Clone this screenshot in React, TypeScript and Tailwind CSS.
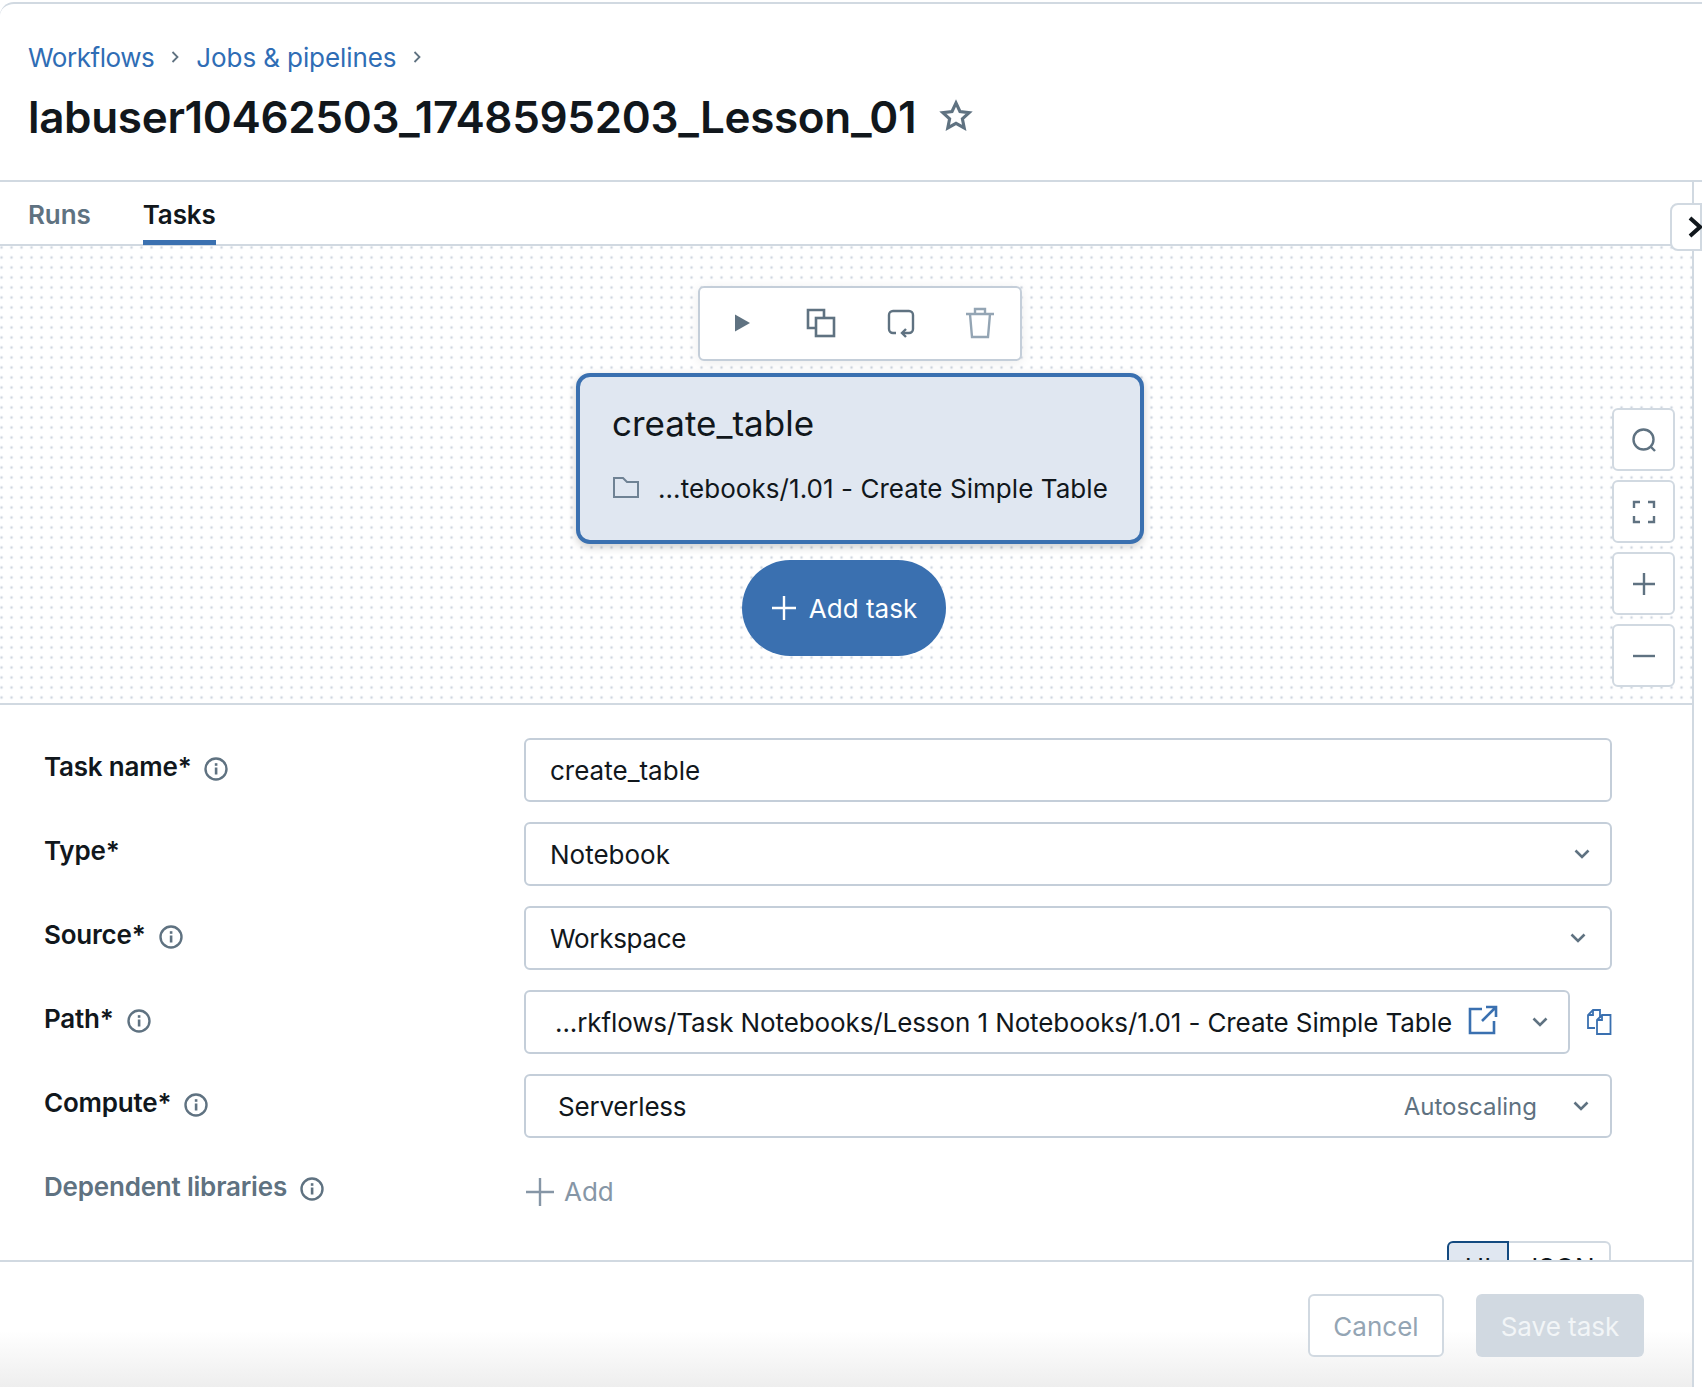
import React from 'react';

const InfoIcon = () => (
  <svg width="24" height="24" viewBox="0 0 24 24" fill="none" className="mt-[5px] shrink-0">
    <circle cx="12" cy="12" r="10.5" stroke="#5f7281" strokeWidth="2.400" />
    <rect x="10.800" y="10.500" width="2.600" height="7" fill="#5f7281" />
    <rect x="10.800" y="6.200" width="2.600" height="2.600" fill="#5f7281" />
  </svg>
);

const Chevron = () => (
  <svg width="20" height="20" viewBox="0 0 20 20" fill="none" className="shrink-0">
    <path d="M3.5 6.5 10 13l6.5-6.5" stroke="#5f7281" strokeWidth="2.600" />
  </svg>
);

const Crumb = () => (
  <svg width="12" height="16" viewBox="0 0 12 16" fill="none" className="shrink-0">
    <path d="M3.5 3 8.5 8l-5 5" stroke="#5f7281" strokeWidth="1.800" />
  </svg>
);

const ZoomButton: React.FC<{ children: React.ReactNode }> = ({ children }) => (
  <div className="flex h-[63px] w-[63px] items-center justify-center rounded-[6px] border-2 border-[#d1d9e1] bg-white">
    {children}
  </div>
);

const FieldLabel: React.FC<{ label: string; info?: boolean; muted?: boolean }> = ({ label, info = true, muted }) => (
  <div className={`flex h-[57px] items-center gap-[13px] text-[26px] font-semibold tracking-[-0.2px] ${muted ? 'text-[#5f7281]' : 'text-[#11171c]'}`}>
    <span>{label}</span>
    {info && <InfoIcon />}
  </div>
);

const inputBox = 'flex h-[64px] items-center rounded-[6px] border-2 border-[#c4ced9] bg-white text-[26px] text-[#11171c]';

export default function App() {
  return (
    <div
      className="flex h-[1387px] w-[1702px] flex-col overflow-hidden bg-white text-[#11171c]"
      style={{ fontFamily: 'Inter, "Liberation Sans", sans-serif' }}
    >
      {/* page header */}
      <div className="mt-[2px] h-[180px] shrink-0 rounded-tl-[14px] border-t-2 border-b-2 border-[#d1d9e1] pl-[28px]">
        <div className="mt-[35px] flex h-[36px] items-center text-[26px] text-[#2f6db5]">
          <span className="tracking-[-0.45px]">Workflows</span>
          <span className="ml-[15px] mr-[15px]"><Crumb /></span>
          <span className="tracking-[-0.1px]">Jobs &amp; pipelines</span>
          <span className="ml-[15px]"><Crumb /></span>
        </div>
        <div className="mt-[12px] flex h-[60px] items-center">
          <h1 className="text-[44px] font-semibold tracking-[-0.33px]">labuser10462503_1748595203_Lesson_01</h1>
          <svg width="34" height="34" viewBox="0 0 24 24" fill="none" className="-mt-[2px] ml-[23px]">
            <path d="M12 2.8l2.8 6 6.5.8-4.8 4.4 1.3 6.4L12 17.2l-5.8 3.2 1.3-6.4L2.700 9.600l6.500-.8z" stroke="#5f7281" strokeWidth="2.200" strokeLinejoin="miter" />
          </svg>
        </div>
      </div>

      {/* everything under the header sits left of the collapsed side panel */}
      <div className="relative flex min-h-0 w-[1694px] flex-1 flex-col border-r-2 border-[#d1d9e1]">
        <div className="flex h-[64px] shrink-0 items-end gap-[52px] border-b-2 border-[#d1d9e1] pl-[28px] text-[26px] font-semibold tracking-[-0.1px]">
          <div className="h-[49px] text-[#5f7281]">Runs</div>
          <div className="-mb-[1px] h-[50px] border-b-[5px] border-[#3a70b0]">Tasks</div>
        </div>

        <button className="absolute right-[-10px] top-[21px] z-10 flex h-[48px] w-[32px] items-center rounded-l-[8px] border-2 border-[#d1d9e1] bg-white pl-[16px]">
          <svg width="16" height="24" viewBox="0 0 16 24" fill="none" className="shrink-0">
            <path d="M2 3l10 9-10 9" stroke="#11171c" strokeWidth="4" />
          </svg>
        </button>

        {/* graph canvas */}
        <div className="relative h-[459px] shrink-0 border-b-2 border-[#d1d9e1] bg-[radial-gradient(#cfd7e0_1.5px,transparent_1.6px)] bg-[size:10px_10px] bg-[position:-3.500px_6.500px]">
          <div className="absolute left-[698px] top-[40px] flex h-[75px] w-[324px] items-center rounded-[6px] border-2 border-[#c4ced9] bg-white pb-[2px] pl-[2px] shadow-[0_2px_12px_rgba(0,0,0,0.08)]">
            <div className="flex w-[80px] justify-center">
              <svg width="24" height="24" viewBox="0 0 24 24">
                <path d="M5 3.500 20 12 5 20.500z" fill="#5f7281" />
              </svg>
            </div>
            <div className="flex w-[80px] justify-center">
              <svg width="30" height="30" viewBox="0 0 30 30" fill="none" stroke="#5f7281" strokeWidth="2.600">
                <path d="M10 20H2V2h16v8" />
                <rect x="10" y="10" width="18" height="18" />
              </svg>
            </div>
            <div className="flex w-[80px] justify-center">
              <svg width="30" height="30" viewBox="0 0 30 30" fill="none" stroke="#5f7281" strokeWidth="2.400">
                <path d="M10 25H7a4 4 0 0 1-4-4V7a4 4 0 0 1 4-4h16a4 4 0 0 1 4 4v14a4 4 0 0 1-4 4h-6" />
                <path d="M20 21l-4 4 4 4" />
              </svg>
            </div>
            <div className="flex w-[80px] justify-center">
              <svg width="30" height="32" viewBox="0 0 30 32" fill="none" stroke="#94a5b4" strokeWidth="2.400">
                <path d="M1 7h28M10 7V2h10v5M5 7l2 23h16l2-23" />
              </svg>
            </div>
          </div>

          <div className="absolute left-[576px] top-[127px] h-[171px] w-[568px] rounded-[14px] border-[4px] border-[#3a70b0] bg-[#e0e7f1] pl-[32px] pt-[24px] shadow-[0_3px_8px_rgba(0,0,0,0.2)]">
            <div className="text-[35px] leading-[44px]">create_table</div>
            <div className="mt-[23px] flex h-[40px] items-center text-[26px] tracking-[0.06px]">
              <svg width="28" height="24" viewBox="0 0 28 24" fill="none" stroke="#6f8294" strokeWidth="2" className="-mt-[2px] shrink-0">
                <path d="M2 3h9l4 4h11v15H2z" />
              </svg>
              <span className="ml-[18px]">...tebooks/1.01 - Create Simple Table</span>
            </div>
          </div>

          <div className="absolute left-[742px] top-[314px] flex h-[96px] w-[204px] items-center justify-center gap-[12px] rounded-full bg-[#3a70b0] text-[26px] text-white">
            <svg width="26" height="26" viewBox="0 0 26 26" stroke="white" strokeWidth="2.400">
              <path d="M13 1v24M1 13h24" />
            </svg>
            <span>Add task</span>
          </div>

          <div className="absolute right-[17px] top-[162px] flex flex-col gap-[9px]">
            <ZoomButton>
              <svg width="26" height="26" viewBox="0 0 26 26" fill="none" stroke="#5f7281" strokeWidth="2.400">
                <circle cx="12.500" cy="12.500" r="10" />
                <path d="M19.500 19.500 24 24" />
              </svg>
            </ZoomButton>
            <ZoomButton>
              <svg width="24" height="24" viewBox="0 0 24 24" fill="none" stroke="#5f7281" strokeWidth="2.400">
                <path d="M8 2H2v6M16 2h6v6M8 22H2v-6M16 22h6v-6" />
              </svg>
            </ZoomButton>
            <ZoomButton>
              <svg width="24" height="24" viewBox="0 0 24 24" stroke="#5f7281" strokeWidth="2.400">
                <path d="M12 1v22M1 12h22" />
              </svg>
            </ZoomButton>
            <ZoomButton>
              <svg width="24" height="24" viewBox="0 0 24 24" stroke="#5f7281" strokeWidth="2.400">
                <path d="M1 12h22" />
              </svg>
            </ZoomButton>
          </div>
        </div>

        {/* task form */}
        <div className="min-h-0 flex-1 overflow-hidden pl-[44px] pr-[81px] pt-[33px]">
          <div className="grid grid-cols-[480px_1fr] gap-y-[20px]">
            <FieldLabel label="Task name*" />
            <div className={`${inputBox} pl-[24px]`}>create_table</div>

            <FieldLabel label="Type*" info={false} />
            <div className={`${inputBox} justify-between pl-[24px] pr-[18px]`}>
              <span>Notebook</span>
              <Chevron />
            </div>

            <FieldLabel label="Source*" />
            <div className={`${inputBox} justify-between pl-[24px] pr-[22px]`}>
              <span className="tracking-[-0.3px]">Workspace</span>
              <Chevron />
            </div>

            <FieldLabel label="Path*" />
            <div className="flex items-center">
              <div className={`${inputBox} w-[1046px] pl-[29px] pr-[18px]`}>
                <span className="flex-1 whitespace-nowrap tracking-[-0.1px]">...rkflows/Task Notebooks/Lesson 1 Notebooks/1.01 - Create Simple Table</span>
                <svg width="30" height="30" viewBox="0 0 30 30" fill="none" stroke="#3a70b0" strokeWidth="2.600" className="-mt-[4px] shrink-0">
                  <path d="M14 4H2v24h24V16" />
                  <path d="M14 16 28 2M18 2h10v10" />
                </svg>
                <span className="ml-[32px]"><Chevron /></span>
              </div>
              <svg width="26" height="26" viewBox="0 0 26 26" fill="none" stroke="#3a70b0" strokeWidth="1.800" className="ml-[16px] shrink-0">
                <path d="M9 19H2V6l5-5h7v8" />
                <path d="M2 6h5V1" />
                <path d="M11 11l5-5h8.500v19H11z" />
                <path d="M11 11h5V6" />
              </svg>
            </div>

            <FieldLabel label="Compute*" />
            <div className={`${inputBox} justify-between pl-[32px] pr-[19px]`}>
              <span className="tracking-[-0.2px]">Serverless</span>
              <div className="flex items-center gap-[34px]">
                <span className="mt-[1px] text-[24px] text-[#5f7281]">Autoscaling</span>
                <Chevron />
              </div>
            </div>

            <FieldLabel label="Dependent libraries" muted />
            <div className="ml-[2px] mt-[2px] flex h-[63px] items-center gap-[10px] text-[26px] text-[#8696a6]">
              <svg width="28" height="28" viewBox="0 0 28 28" stroke="#8696a6" strokeWidth="2.400">
                <path d="M14 0v28M0 14h28" />
              </svg>
              <span>Add</span>
            </div>
          </div>

          <div className="mt-[18px] flex justify-end text-[26px]">
            <div className="flex h-[60px] w-[62px] justify-center rounded-l-[6px] border-2 border-[#134a80] bg-[#e0e7f1] pt-[5px]">UI</div>
            <div className="flex h-[60px] w-[102px] justify-center rounded-r-[6px] border-2 border-l-0 border-[#d1d9e1] pt-[5px]">JSON</div>
          </div>
        </div>

        {/* footer */}
        <div className="flex h-[127px] shrink-0 justify-end gap-[32px] border-t-2 border-[#d1d9e1] bg-gradient-to-b from-white from-55% to-[#eeeeee] pr-[48px] pt-[32px] text-[26px]">
          <div className="flex h-[63px] w-[136px] items-center justify-center rounded-[6px] border-2 border-[#d1d9e1] bg-white pt-[2px] text-[#94a5b4]">Cancel</div>
          <div className="flex h-[63px] w-[168px] items-center justify-center rounded-[6px] bg-[#d1d9e1] pt-[2px] text-[#f2f5f7]">Save task</div>
        </div>
      </div>
    </div>
  );
}
